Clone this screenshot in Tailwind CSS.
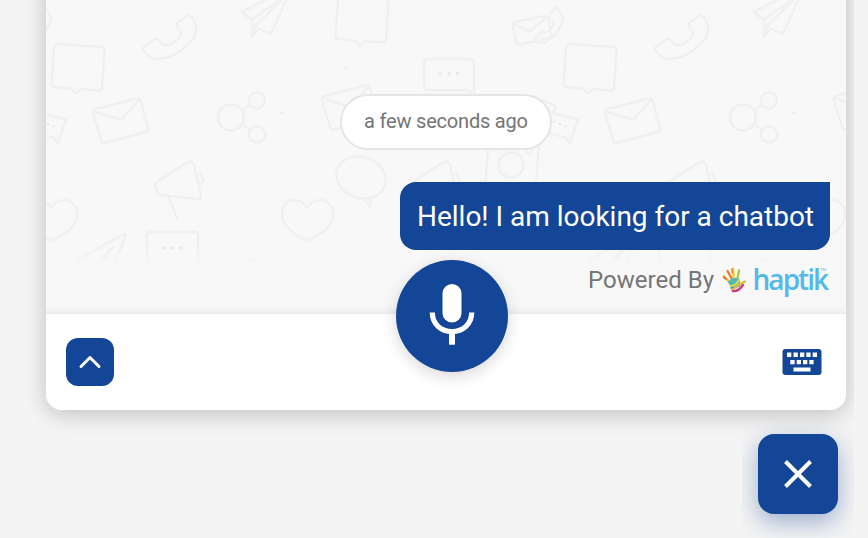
<!DOCTYPE html>
<html lang="en">
<head>
<meta charset="utf-8">
<title>Chat</title>
<script src="https://cdn.jsdelivr.net/npm/@tailwindcss/browser@4"></script>
</head>
<body class="bg-[#f4f4f4] font-[Roboto,sans-serif]">
<div class="relative flex h-[538px] w-[868px] flex-col overflow-hidden bg-[#f4f4f4]">
  <div class="h-[450px] w-[854px] overflow-hidden pl-[46px]">
    <main class="-mt-10 flex h-[450px] w-[800px] flex-col rounded-b-[16px] bg-[#f8f8f8] pt-10 shadow-[0_4px_22px_rgba(0,0,0,0.22)]">
      <section class="relative h-[314px] overflow-hidden">
        <svg class="absolute top-0 left-0" width="800" height="268" viewBox="46 0 800 268" fill="none" stroke="#f0f0f0" stroke-width="2.4" stroke-linejoin="round" stroke-linecap="round">
          <defs>
            <linearGradient id="fade" x1="0" y1="0" x2="0" y2="1"><stop offset="0" stop-color="#f8f8f8" stop-opacity="0"/><stop offset="1" stop-color="#f8f8f8"/></linearGradient>
            <g id="env"><path d="M95 109L137 98.500Q140 98 141 101L148 128Q149 131 146 132L105 142.500Q102 143 101 140L93 113Q92 110 95 109ZM93.500 111L121 120L140 99"/></g>
            <g id="box"><path d="M57 44L102 47Q105 48 104.500 51L102 88Q101 91 98 90.500L81 89L76 93.500L71 88.500L54 87Q51 86 51.500 83L54 47Q54.500 44 57 44Z"/></g>
            <g id="horn"><path d="M188 162Q192 160 194 165L201 195Q201 199 197 199L160 195Q158 195 157 192L155 186Q155 183 157 182ZM169 198L177 218M197 174Q201 172 203 180Q203 185 200 184"/></g>
            <path id="heart" d="M307 208C301 196 282 197 282 214C282 226 295 236 307 240C320 236 333 226 333 214C333 197 313 196 307 208Z"/>
            <path id="phone" d="M189 14.500C196 20 198 28 194 37C188 48 171 59 158 59C151 59 146 55 143 50Q142 48.500 144 47L155 39Q157 38 158.500 40L162 44C166 47 172 44 177 40C182 36 182 32 177 27Q175.500 25 178 22.500Z"/>
            <g id="tile">
              <use href="#phone"/><use href="#box"/><use href="#box" x="284" y="-48"/>
              <use href="#env"/><use href="#env" x="229" y="-13"/>
              <use href="#horn"/><use href="#horn" x="256"/>
              <use href="#heart"/><use href="#heart" x="-256"/>
              <circle cx="231" cy="117.500" r="13"/><circle cx="257" cy="100.500" r="8"/><circle cx="257" cy="134.500" r="8"/>
              <path d="M242 110L250 105M242 124L250 130"/>
              <path d="M290 -12L241.500 12L251.500 20L252 37L259 29L271 33.500L293 -14M251.500 20L282 -2M252 36L256 25L290 -8M259 29L255 25"/>
              <path d="M427 59H471Q474 59 474 62V95M427 90Q424 90 424 87V62Q424 59 427 59M427 90H466Q470 90 472 94"/>
              <path d="M516 22L544 16Q547 15 548 19L552 37L518 45Q517 45 516 42L512.500 25Q512.500 23 516 22ZM513 24L530 31L547 17M555 7Q563 13 563 19C560 31 550 43 541 43Q536 43 534 40L540 33Q542 30 545 33C549 32 552 28 554 23L549 17Z"/>
              <path d="M538 109L578 119.500L570 143.500L566 138L532 128M542 100L556 106L554 112"/>
              <ellipse cx="361" cy="177.500" rx="25" ry="20.500" transform="rotate(20 361 177.500)"/><path d="M362 198Q367 202 370 207L371 197"/>
              <path d="M488 146L484 206Q484 210 488 210L530 212Q534 212 534 208L539 146"/><circle cx="511" cy="165" r="12.500"/><circle cx="529.500" cy="151" r="3"/>
              <path d="M75 261L122 235Q126 233 125 238L112 268M75 261L85 268M93 266L114 246L102 262"/>
              <path d="M147 268V235Q147 232 150 232H195Q198 232 198 235V268M242 265Q251 255 261 265"/>
              <g fill="#eaeaea" stroke="none"><circle cx="346" cy="67.500" r="1.300"/><circle cx="282" cy="112.500" r="1.300"/><circle cx="440" cy="73.500" r="1.900"/><circle cx="449" cy="73.500" r="1.900"/><circle cx="457.500" cy="73.500" r="1.900"/><circle cx="164" cy="248" r="2"/><circle cx="172.500" cy="248" r="2"/><circle cx="181" cy="248" r="2"/><circle cx="554" cy="122" r="1.200"/><circle cx="560" cy="124" r="1.200"/><circle cx="565.500" cy="126" r="1.200"/></g>
            </g>
          </defs>
          <use href="#tile" x="-512"/><use href="#tile"/><use href="#tile" x="512"/>
          <rect x="46" y="246" width="800" height="22" fill="url(#fade)" stroke="none"/>
        </svg>
        <div class="relative flex flex-col items-end pt-[94px] pr-4">
          <div class="mr-[278px] flex h-14 w-[212px] items-center justify-center rounded-full border-2 border-[#e5e5e5] bg-white pb-px text-[20px] whitespace-nowrap text-[#757575]"><svg class="overflow-visible" width="164" height="24"><text x="0" y="17.800" textLength="164" fill="#757575">a few seconds ago</text></svg></div>
          <div class="mt-8 flex h-[68px] w-[430px] items-center rounded-[16px] rounded-tr-none bg-[#134696] pl-[17px] text-[28px]"><svg class="overflow-visible" width="397" height="34"><text x="0" y="27" textLength="397" fill="#fff">Hello! I am looking for a chatbot</text></svg></div>
          <svg class="mt-2 overflow-visible" width="242" height="48" viewBox="588 258 242 48">
            <text x="588" y="288" font-size="24" textLength="126" fill="#757575">Powered By</text>
            <g fill="none" stroke-linecap="round">
              <path d="M724 276L730 283" stroke="#f4c528" stroke-width="2.300"/>
              <path d="M723.500 277L726 279" stroke="#e9445f" stroke-width="1.600"/>
              <path d="M727.500 271L733 281" stroke="#ee7630" stroke-width="2.300"/>
              <path d="M733 268.500L734 280" stroke="#ead53d" stroke-width="2.500"/>
              <path d="M732 269L732.500 273" stroke="#f2752d" stroke-width="1.500"/>
              <path d="M739 270.500L737 281" stroke="#a8c94b" stroke-width="2.400"/>
              <path d="M729 282Q734 277 739 280L739 286L732 287Z" fill="#54b9b5" stroke="#54b9b5" stroke-width="2"/>
              <path d="M730 286Q736 286 739 280" stroke="#e5df42" stroke-width="1.700"/>
              <path d="M731 288Q737 288 741 284" stroke="#3386bd" stroke-width="1.500"/>
              <path d="M732 290Q739 284 745 281.500" stroke="#e6bd38" stroke-width="2.200"/>
              <path d="M733 291Q738 292 743 285" stroke="#d43783" stroke-width="2.300"/>
            </g>
            <text x="752.500" y="289.500" font-family="Open Sans" font-weight="600" font-size="28" letter-spacing="-1.95" fill="#53b9e9">haptik<tspan x="820" y="271" font-family="Roboto" font-weight="400" font-size="4" letter-spacing="0">TM</tspan></text>
          </svg>
        </div>
        <div class="absolute inset-x-0 bottom-0 h-2 bg-linear-to-b from-transparent to-black/4"></div>
        <div class="absolute inset-x-0 bottom-0 h-px bg-black/2"></div>
      </section>
      <footer class="relative flex h-24 items-center justify-between rounded-b-[16px] bg-white px-5">
        <button class="flex size-12 items-center justify-center rounded-[12px] bg-[#134696]">
          <svg width="48" height="48" fill="none" stroke="#fff" stroke-width="3" stroke-linecap="round" stroke-linejoin="round"><path d="M15 28.500L24 19.500L33 28.500"/></svg>
        </button>
        <svg class="mr-[4px]" width="40" height="28" viewBox="782 348 40 28"><rect x="782.500" y="349" width="39" height="26" rx="3" fill="#134696"/><g fill="#fff"><path d="M787 352.500h4.300v4.500h-4.300zM793.500 352.500h4.300v4.500h-4.300zM800 352.500h4.300v4.500h-4.300zM806.300 352.500h4.300v4.500h-4.300zM812.700 352.500h4.300v4.500h-4.300zM790.300 360h4.300v4.300h-4.300zM796.700 360h4.300v4.300h-4.300zM803 360h4.300v4.300h-4.300zM809.300 360h4.300v4.300h-4.300zM793.500 367.500h17v4h-17z"/></g></svg>
        <button class="absolute -top-[54px] left-[350px] size-28 rounded-full bg-[#134696] shadow-[0_4px_16px_rgba(0,0,0,0.16)]">
          <svg width="112" height="112" viewBox="396 260 112 112"><rect x="442.500" y="284" width="19" height="38.500" rx="9.500" fill="#fff"/><path d="M432.300 312.500C432.300 324 441 331.500 452 331.500S471.700 324 471.700 312.500M452 331V344.500" fill="none" stroke="#fff" stroke-width="5.200"/><path d="M449 330h6v14.500h-6z" fill="#fff"/></svg>
        </button>
      </footer>
    </main>
  </div>
  <div class="absolute top-[410px] left-[742px] h-[128px] w-[112px] overflow-hidden px-4 pt-6">
    <button class="flex size-20 items-center justify-center rounded-[16px] bg-[#134696] shadow-[0_8px_24px_rgba(19,70,150,0.4)]">
      <svg width="80" height="80" fill="none" stroke="#fff" stroke-width="4"><path d="M27.500 27.500L52.500 52.500M52.500 27.500L27.500 52.500"/></svg>
    </button>
  </div>
</div>
</body>
</html>
